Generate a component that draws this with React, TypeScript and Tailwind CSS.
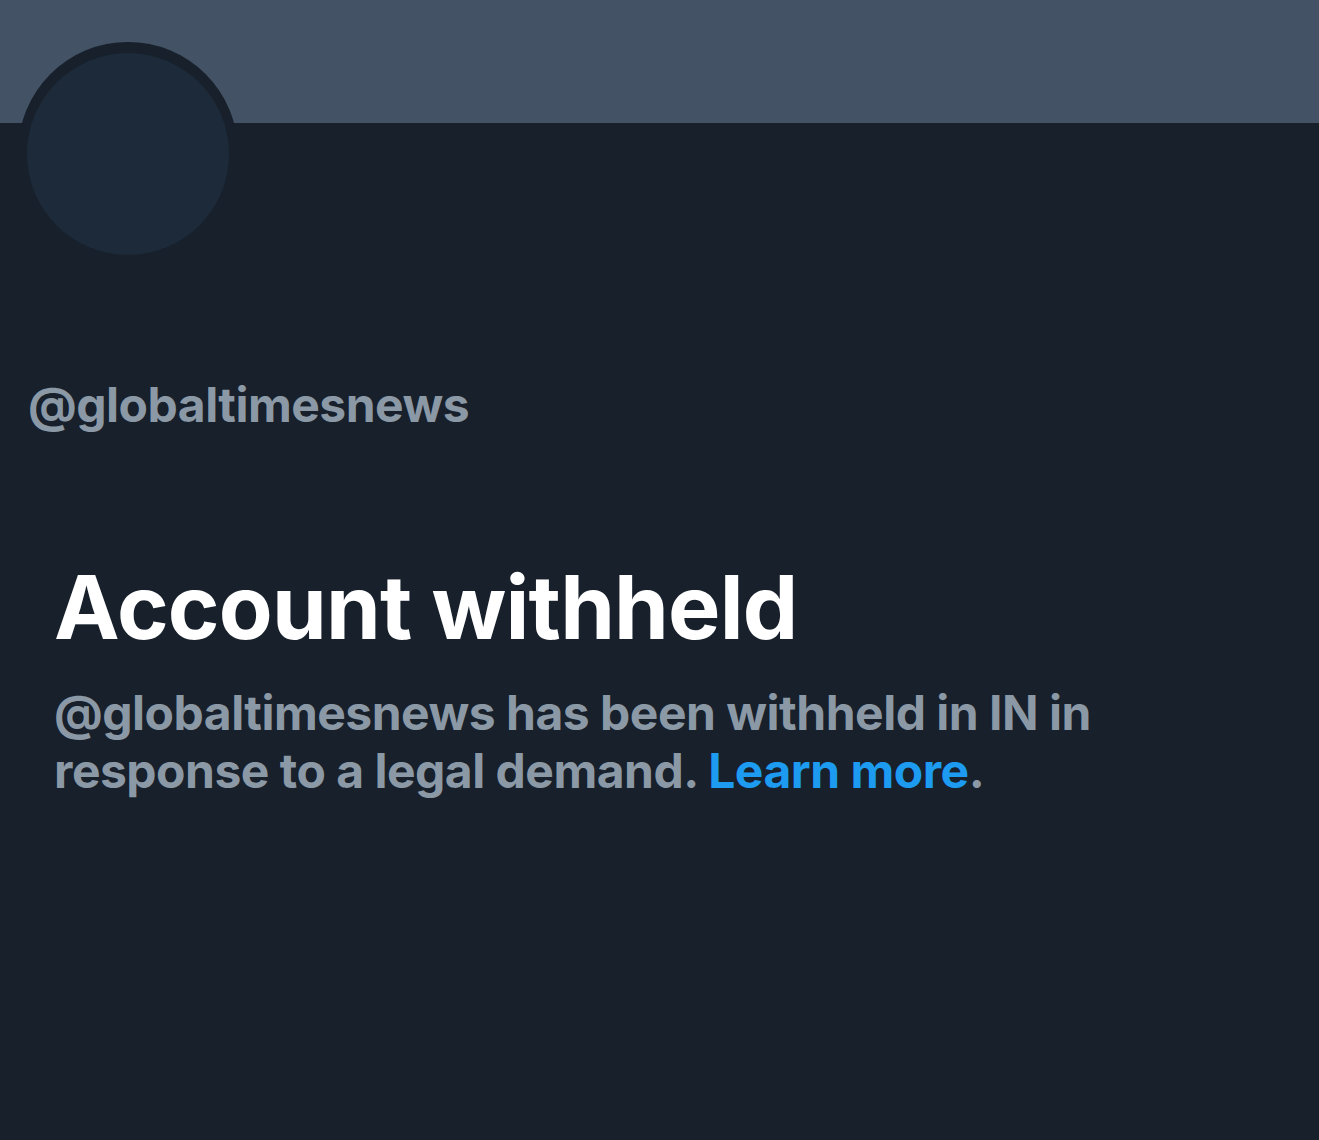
export default function App() {
  return (
    <div className="w-[1319px] h-[1140px] bg-[#17202b] overflow-hidden" style={{ fontFamily: "Inter, 'Noto Sans', sans-serif" }}>
      <div className="h-[123px] bg-[#435365]" />
      <div className="px-[18px]">
        <div className="-mt-[81px] w-[220px] h-[220px] rounded-full bg-[#17202b] flex items-center justify-center">
          <div className="mt-[4px] w-[202px] h-[202px] rounded-full bg-[#1c2a3a]" />
        </div>
      </div>
      <div className="pl-[28px] mt-[115px] text-[48px] leading-[56px] font-bold text-[#8b98a5] tracking-[-0.5px]">@globaltimesnews</div>
      <div className="pl-[54px] mt-[124px]">
        <h1 className="text-[88px] leading-[100px] font-bold text-white tracking-[-0.8px]">Account withheld</h1>
        <p className="mt-[27px] text-[48px] leading-[58px] font-bold text-[#8b98a5] tracking-[-0.5px] max-w-[1100px]">
          @globaltimesnews has been withheld in IN in response to a legal demand. <span className="text-[#1d9bf0]">Learn more</span>.
        </p>
      </div>
    </div>
  );
}
